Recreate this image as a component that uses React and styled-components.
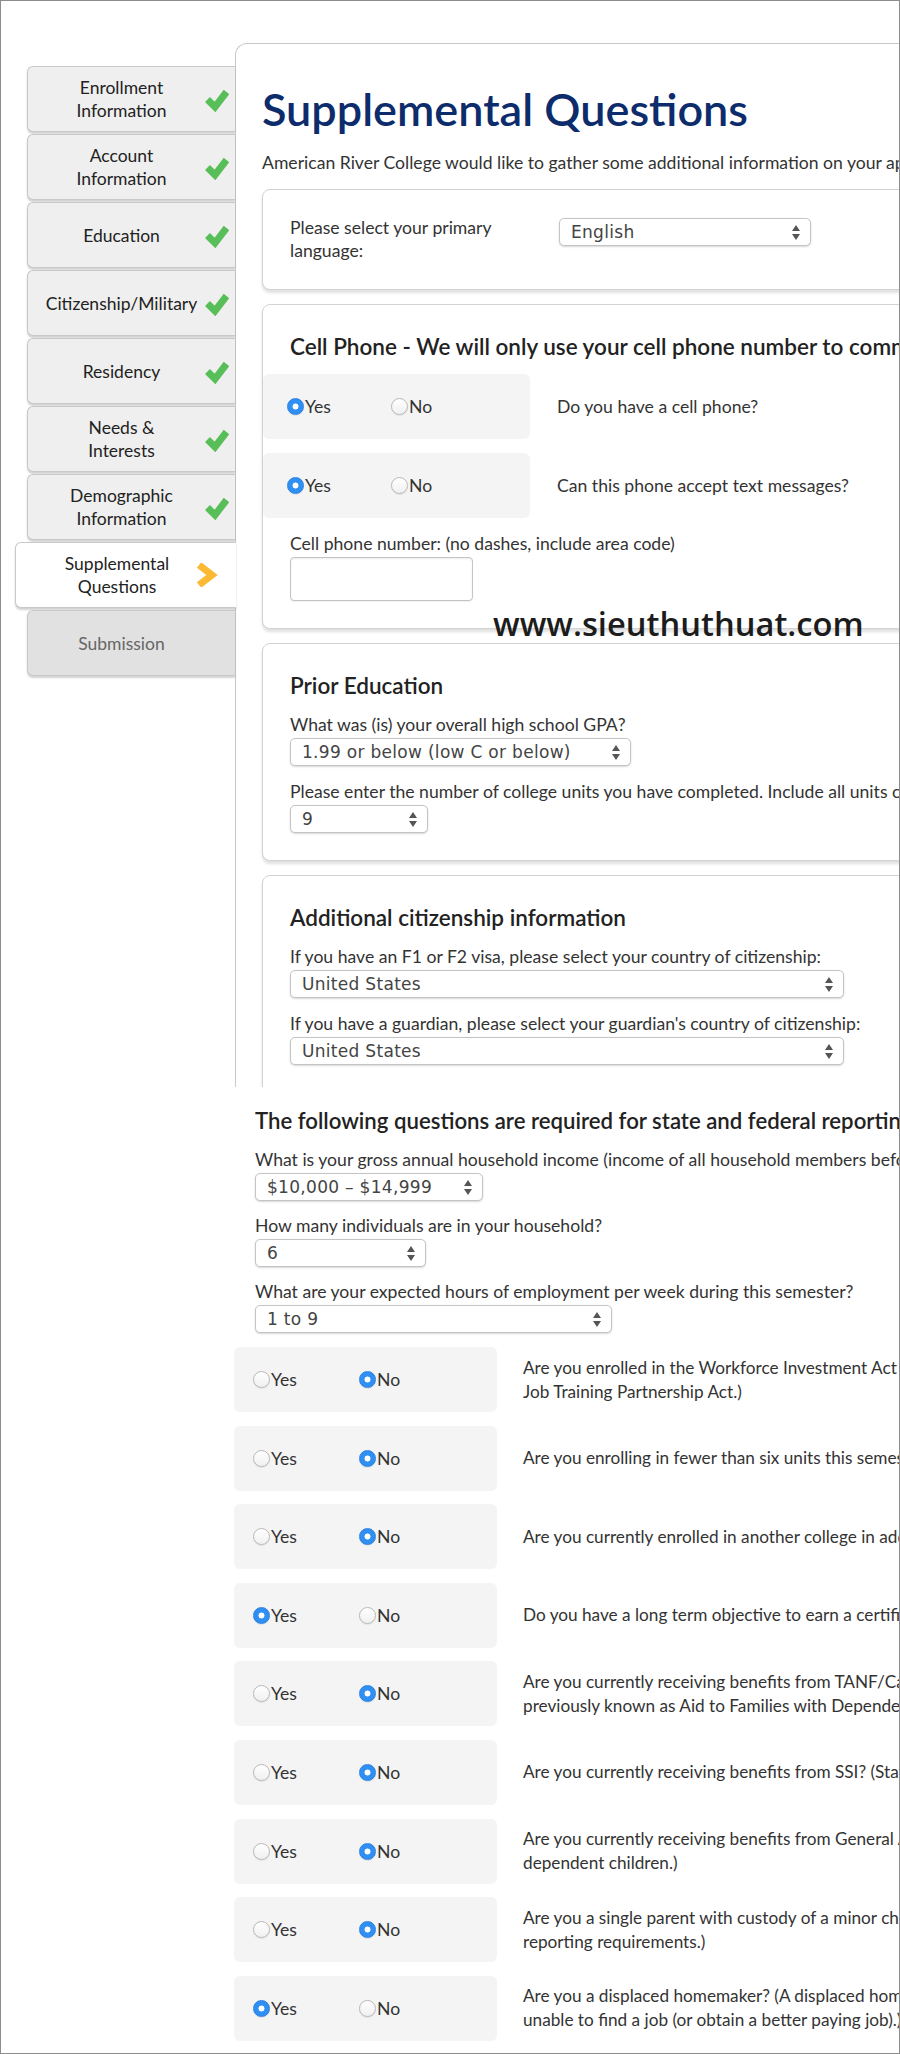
import styled, { createGlobalStyle } from "styled-components";

const GlobalStyle = createGlobalStyle`
  html, body {
    margin: 0;
    padding: 0;
    background: #fff;
  }
  body {
    font-family: Lato, "Open Sans", sans-serif;
    color: #333;
  }
  * {
    box-sizing: border-box;
  }
`;

const Frame = styled.div`
  position: relative;
  width: 900px;
  height: 2054px;
  border: 1px solid #8c8c8c;
  overflow: hidden;
  background: #fff;
`;

const Top = styled.div`
  display: flex;
  height: 1086px;
  overflow: hidden;
`;

const Sidebar = styled.nav`
  flex: 0 0 234px;
  padding: 65px 0 0 26px;
  display: flex;
  flex-direction: column;
  gap: 2px;
  position: relative;
  z-index: 1;
`;

const Tab = styled.div`
  height: 66px;
  display: grid;
  grid-template-columns: 1fr ${({ $active }) => ($active ? "22px" : "24px")};
  align-items: center;
  padding-right: ${({ $active }) => ($active ? "18px" : "6px")};
  margin-left: ${({ $active }) => ($active ? "-12px" : "0")};
  margin-right: ${({ $active }) => ($active ? "-1px" : "0")};
  background: ${({ $active, $disabled }) =>
    $active ? "#fff" : $disabled ? "#e1e1e1" : "#efefef"};
  border: 1px solid #c9c9c9;
  border-right: none;
  border-radius: 6px 0 0 6px;
  box-shadow: 0 2px 2px rgba(0, 0, 0, 0.18);
  color: ${({ $disabled }) => ($disabled ? "#666" : "#222")};
  font-size: 17.5px;
  line-height: 23px;
`;

const TabLabel = styled.div`
  text-align: center;
  padding-left: ${({ $active }) => ($active ? "22px" : "10px")};
`;

const Panel = styled.main`
  flex: 0 0 1000px;
  margin-top: 42px;
  border-top: 1px solid #c9c9c9;
  border-left: 1px solid #c9c9c9;
  border-top-left-radius: 12px;
  padding: 37px 0 0 26px;
`;

const Title = styled.h1`
  margin: 0;
  font-size: 45px;
  line-height: 56px;
  font-weight: 600;
  color: #0c2c6b;
  white-space: nowrap;
`;

const Intro = styled.p`
  margin: 14px 0;
  font-size: 17.6px;
  line-height: 24px;
  white-space: nowrap;
`;

const Card = styled.section`
  width: 900px;
  border: 1px solid #d3d3d3;
  border-radius: 8px;
  box-shadow: 0 3px 3px rgba(0, 0, 0, 0.12);
  padding: ${({ $pad }) => $pad || "28px 27px 27px"};
  margin-bottom: 14px;
  background: #fff;
`;

const LanguageRow = styled.div`
  display: grid;
  grid-template-columns: 269px 252px;
  align-items: start;
`;

const LanguageLabel = styled.div`
  width: 215px;
  font-size: 17.6px;
  line-height: 23px;
`;

const Heading = styled.h2`
  margin: 0 0 13px;
  font-size: ${({ $size }) => $size || "22.5px"};
  line-height: 28px;
  font-weight: 600;
  color: #222;
  white-space: nowrap;
`;

const FieldLabel = styled.div`
  font-size: 17.6px;
  line-height: 23px;
  margin-bottom: 2px;
  white-space: nowrap;
`;

const SelectBox = styled.div`
  width: ${({ $w }) => $w}px;
  height: 28px;
  margin: ${({ $m }) => $m || "0 0 13px"};
  display: flex;
  align-items: center;
  justify-content: space-between;
  padding: 0 10px 0 11px;
  border: 1px solid #c4c4c4;
  border-radius: 5px;
  box-shadow: 0 1px 2px rgba(0, 0, 0, 0.16);
  background: #fff;
  font-family: "DejaVu Sans", sans-serif;
  font-size: 17px;
  color: #444;
  letter-spacing: 0.3px;
  white-space: nowrap;
`;

const TextInput = styled.div`
  width: 183px;
  height: 44px;
  border: 1px solid #c4c4c4;
  border-radius: 4px;
  box-shadow: inset 0 1px 2px rgba(0, 0, 0, 0.08), 0 1px 1px rgba(0, 0, 0, 0.06);
  background: #fff;
`;

const RadioRow = styled.div`
  display: flex;
  align-items: center;
  height: 65px;
  margin: ${({ $compact }) => ($compact ? "0 0 13.6px 0" : "0 0 14px -27px")};
`;

const RadioBox = styled.div`
  flex: 0 0 ${({ $compact }) => ($compact ? "263px" : "267px")};
  height: 65px;
  display: flex;
  align-items: center;
  padding-left: ${({ $compact }) => ($compact ? "19px" : "24px")};
  background: #f4f4f4;
  border-radius: 6px;
`;

const Option = styled.label`
  width: ${({ $compact }) => ($compact ? "106px" : "104px")};
  display: flex;
  align-items: center;
  font-size: 17.6px;
  color: #333;
`;

const Circle = styled.span`
  width: 17px;
  height: 17px;
  border-radius: 50%;
  flex: 0 0 17px;
  margin-right: 1px;
  border: 1px solid ${({ $on }) => ($on ? "#2a80e0" : "#b8b8b8")};
  background: ${({ $on }) =>
    $on
      ? "radial-gradient(circle, #fff 0 2.7px, #2f8ff3 3.3px)"
      : "linear-gradient(#fff, #f0f0f0)"};
  box-shadow: 0 1px 1px rgba(0, 0, 0, 0.08);
`;

const Question = styled.div`
  margin-left: ${({ $compact }) => ($compact ? "26px" : "27px")};
  font-size: ${({ $compact }) => ($compact ? "17.2px" : "17.6px")};
  line-height: 24px;
  color: #333;
  white-space: nowrap;
`;

const Bottom = styled.section`
  padding: 20px 0 0 233px;
`;

const BottomFields = styled.div`
  padding-left: 21px;
  margin-bottom: 1px;
`;

const Watermark = styled.div`
  position: absolute;
  top: 606px;
  left: 492px;
  font-family: "Open Sans", sans-serif;
  font-size: 32.7px;
  line-height: 34px;
  font-weight: 600;
  color: #1c1c1c;
  white-space: nowrap;
`;

const Check = () => (
  <svg width="24" height="25" viewBox="0 0 24 25">
    <path
      d="M2.5 12.5 L10 20 L21.5 5"
      fill="none"
      stroke="#58bf58"
      strokeWidth="7"
      strokeLinejoin="miter"
    />
  </svg>
);

const Chevron = () => (
  <svg width="22" height="24" viewBox="0 0 22 24">
    <path
      d="M3 2 L16 12 L3 22"
      fill="none"
      stroke="#fbb934"
      strokeWidth="7"
      strokeLinejoin="miter"
    />
  </svg>
);

const Arrows = () => (
  <svg width="8" height="15" viewBox="0 0 8 15">
    <path d="M0 6 L4 0 L8 6 Z M0 9 L4 15 L8 9 Z" fill="#555" />
  </svg>
);

const Select = ({ value, w, m }) => (
  <SelectBox $w={w} $m={m}>
    <span>{value}</span>
    <Arrows />
  </SelectBox>
);

const YesNo = ({ answer, lines, compact }) => (
  <RadioRow $compact={compact}>
    <RadioBox $compact={compact}>
      <Option $compact={compact}>
        <Circle $on={answer === "yes"} />
        Yes
      </Option>
      <Option $compact={compact}>
        <Circle $on={answer === "no"} />
        No
      </Option>
    </RadioBox>
    <Question $compact={compact}>
      {lines.map((l, i) => (
        <div key={i}>{l}</div>
      ))}
    </Question>
  </RadioRow>
);

const tabs = [
  { label: ["Enrollment", "Information"], done: true },
  { label: ["Account", "Information"], done: true },
  { label: ["Education"], done: true },
  { label: ["Citizenship/Military"], done: true },
  { label: ["Residency"], done: true },
  { label: ["Needs &", "Interests"], done: true },
  { label: ["Demographic", "Information"], done: true },
  { label: ["Supplemental", "Questions"], active: true },
  { label: ["Submission"], disabled: true },
];

const questions = [
  {
    answer: "no",
    lines: [
      "Are you enrolled in the Workforce Investment Act (WIA)? (Formerly known as the",
      "Job Training Partnership Act.)",
    ],
  },
  {
    answer: "no",
    lines: ["Are you enrolling in fewer than six units this semester?"],
  },
  {
    answer: "no",
    lines: [
      "Are you currently enrolled in another college in addition to American River College?",
    ],
  },
  {
    answer: "yes",
    lines: ["Do you have a long term objective to earn a certificate or degree?"],
  },
  {
    answer: "no",
    lines: [
      "Are you currently receiving benefits from TANF/CalWORKs? (Temporary Assistance to Needy Families,",
      "previously known as Aid to Families with Dependent Children.)",
    ],
  },
  {
    answer: "no",
    lines: [
      "Are you currently receiving benefits from SSI? (State Supplemental Income)",
    ],
  },
  {
    answer: "no",
    lines: [
      "Are you currently receiving benefits from General Assistance? (General Assistance is for persons without",
      "dependent children.)",
    ],
  },
  {
    answer: "no",
    lines: [
      "Are you a single parent with custody of a minor child? (This question is required for federal",
      "reporting requirements.)",
    ],
  },
  {
    answer: "yes",
    lines: [
      "Are you a displaced homemaker? (A displaced homemaker has been out of the workforce and is",
      "unable to find a job (or obtain a better paying job).)",
    ],
  },
];

export default function App() {
  return (
    <>
      <GlobalStyle />
      <Frame>
        <Top>
          <Sidebar>
            {tabs.map((t, i) => (
              <Tab key={i} $active={t.active} $disabled={t.disabled}>
                <TabLabel $active={t.active}>
                  {t.label.map((l, j) => (
                    <div key={j}>{l}</div>
                  ))}
                </TabLabel>
                {t.done ? <Check /> : t.active ? <Chevron /> : <span />}
              </Tab>
            ))}
          </Sidebar>

          <Panel>
            <Title>Supplemental Questions</Title>
            <Intro>
              American River College would like to gather some additional
              information on your application.
            </Intro>

            <Card $pad="26px 27px 27px">
              <LanguageRow>
                <LanguageLabel>Please select your primary language:</LanguageLabel>
                <Select value="English" w={252} m="2px 0 0" />
              </LanguageRow>
            </Card>

            <Card>
              <Heading>
                Cell Phone - We will only use your cell phone number to
                communicate with you about your application.
              </Heading>
              <YesNo answer="yes" lines={["Do you have a cell phone?"]} />
              <YesNo answer="yes" lines={["Can this phone accept text messages?"]} />
              <FieldLabel>Cell phone number: (no dashes, include area code)</FieldLabel>
              <TextInput />
            </Card>

            <Card $pad="28px 27px 14px">
              <Heading>Prior Education</Heading>
              <FieldLabel>What was (is) your overall high school GPA?</FieldLabel>
              <Select value="1.99 or below (low C or below)" w={341} m="0 0 14px" />
              <FieldLabel>
                Please enter the number of college units you have completed.
                Include all units completed at any college.
              </FieldLabel>
              <Select value="9" w={138} />
            </Card>

            <Card $pad="28px 27px 60px">
              <Heading>Additional citizenship information</Heading>
              <FieldLabel>
                If you have an F1 or F2 visa, please select your country of
                citizenship:
              </FieldLabel>
              <Select value="United States" w={554} m="0 0 14px" />
              <FieldLabel>
                If you have a guardian, please select your guardian's country
                of citizenship:
              </FieldLabel>
              <Select value="United States" w={554} />
            </Card>
          </Panel>
        </Top>

        <Bottom>
          <BottomFields>
            <Heading $size="22.2px">
              The following questions are required for state and federal
              reporting purposes.
            </Heading>
            <FieldLabel>
              What is your gross annual household income (income of all
              household members before taxes)?
            </FieldLabel>
            <Select value="$10,000 – $14,999" w={228} />
            <FieldLabel>How many individuals are in your household?</FieldLabel>
            <Select value="6" w={171} />
            <FieldLabel>
              What are your expected hours of employment per week during this
              semester?
            </FieldLabel>
            <Select value="1 to 9" w={357} m="0 0 14px" />
          </BottomFields>
          {questions.map((q, i) => (
            <YesNo key={i} compact answer={q.answer} lines={q.lines} />
          ))}
        </Bottom>

        <Watermark>www.sieuthuthuat.com</Watermark>
      </Frame>
    </>
  );
}
